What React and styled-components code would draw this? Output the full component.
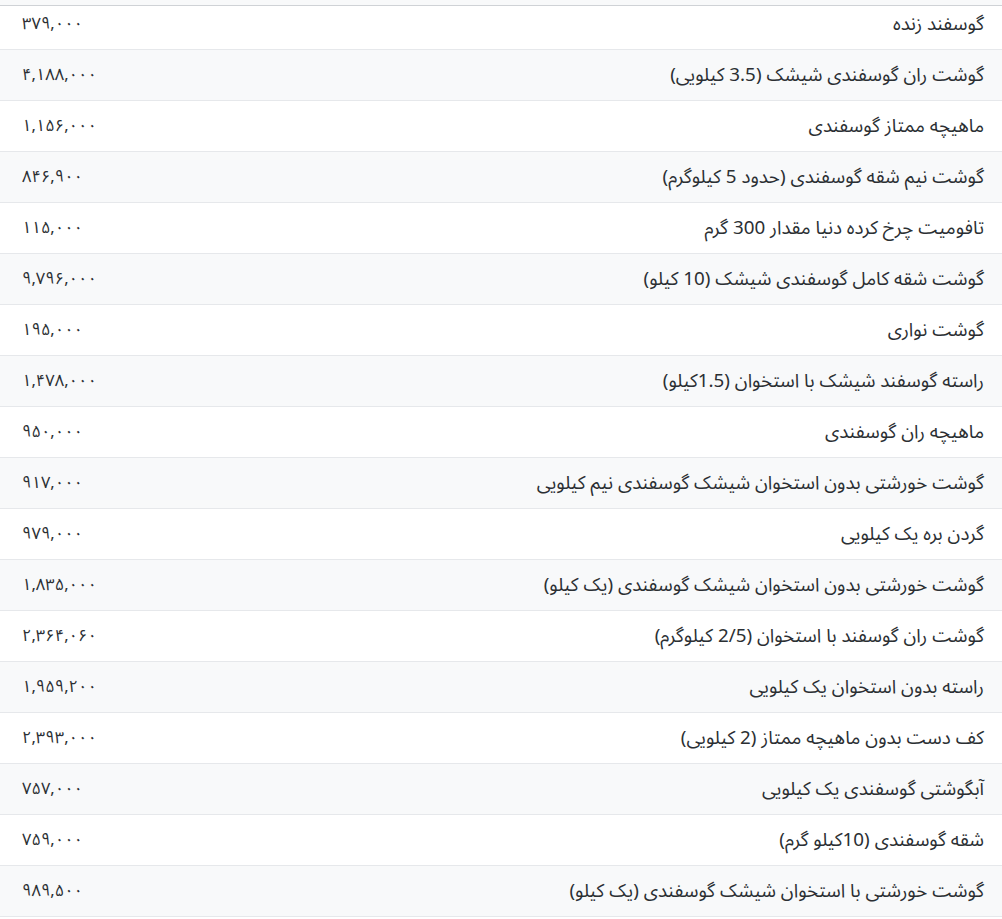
import React from 'react';
import styled, { createGlobalStyle } from 'styled-components';

const GlobalStyle = createGlobalStyle`
  html, body {
    margin: 0;
    padding: 0;
    background: #fff;
  }
  body {
    font-family: "Noto Sans Arabic", "Vazirmatn", "DejaVu Sans", sans-serif;
    color: #2b2f33;
  }
`;

const Page = styled.div`
  width: 1002px;
`;

const HeadEdge = styled.div`
  height: 5px;
  background: #f8f9fa;
  border-bottom: 1px solid #cfd2d6;
`;

const Table = styled.div`
  display: flex;
  flex-direction: column;
  direction: rtl;
`;

const Row = styled.div`
  display: flex;
  align-items: center;
  justify-content: space-between;
  height: 51px;
  box-sizing: border-box;
  border-bottom: 1px solid #e6e8eb;
  background: ${p => (p.$striped ? '#f8f9fa' : '#fff')};

  &:first-child {
    height: 44px;
    padding-bottom: 7px;
  }
`;

const Name = styled.div`
  padding-right: 18px;
  font-size: 18.8px;
  line-height: 24px;
  white-space: nowrap;
`;

const Price = styled.div`
  direction: ltr;
  text-align: left;
  padding-left: 22px;
  font-size: 16.5px;
  line-height: 24px;
  white-space: nowrap;
`;

const items = [
  ['گوسفند زنده', '۳۷۹,۰۰۰'],
  ['گوشت ران گوسفندی شیشک (3.5 کیلویی)', '۴,۱۸۸,۰۰۰'],
  ['ماهیچه ممتاز گوسفندی', '۱,۱۵۶,۰۰۰'],
  ['گوشت نیم شقه گوسفندی (حدود 5 کیلوگرم)', '۸۴۶,۹۰۰'],
  ['تافومیت چرخ کرده دنیا مقدار 300 گرم', '۱۱۵,۰۰۰'],
  ['گوشت شقه کامل گوسفندی شیشک (10 کیلو)', '۹,۷۹۶,۰۰۰'],
  ['گوشت نواری', '۱۹۵,۰۰۰'],
  ['راسته گوسفند شیشک با استخوان (1.5کیلو)', '۱,۴۷۸,۰۰۰'],
  ['ماهیچه ران گوسفندی', '۹۵۰,۰۰۰'],
  ['گوشت خورشتی بدون استخوان شیشک گوسفندی نیم کیلویی', '۹۱۷,۰۰۰'],
  ['گردن بره یک کیلویی', '۹۷۹,۰۰۰'],
  ['گوشت خورشتی بدون استخوان شیشک گوسفندی (یک کیلو)', '۱,۸۳۵,۰۰۰'],
  ['گوشت ران گوسفند با استخوان (2/5 کیلوگرم)', '۲,۳۶۴,۰۶۰'],
  ['راسته بدون استخوان یک کیلویی', '۱,۹۵۹,۲۰۰'],
  ['کف دست بدون ماهیچه ممتاز (2 کیلویی)', '۲,۳۹۳,۰۰۰'],
  ['آبگوشتی گوسفندی یک کیلویی', '۷۵۷,۰۰۰'],
  ['شقه گوسفندی (10کیلو گرم)', '۷۵۹,۰۰۰'],
  ['گوشت خورشتی با استخوان شیشک گوسفندی (یک کیلو)', '۹۸۹,۵۰۰'],
];

const App = () => (
  <Page>
    <GlobalStyle />
    <HeadEdge />
    <Table>
      {items.map(([name, price], i) => (
        <Row key={name} $striped={i % 2 === 1}>
          <Name>{name}</Name>
          <Price>{price}</Price>
        </Row>
      ))}
    </Table>
  </Page>
);

export default App;
